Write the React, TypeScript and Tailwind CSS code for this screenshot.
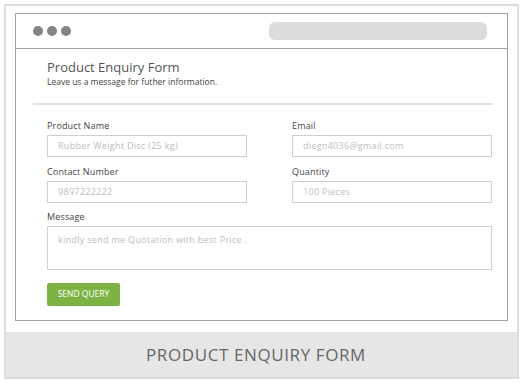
import React from 'react'

const font = { fontFamily: '"Open Sans", "Liberation Sans", sans-serif' }

const Field = ({ label, value }: { label: string; value: string }) => (
  <div className="flex flex-col">
    <label className="text-[9px] leading-[12px] tracking-[0.15px] text-[#444]">{label}</label>
    <div className="mt-[3px] h-[22px] border border-[#cfcfcf] pl-[10px] flex items-center text-[9px] tracking-[0.3px] text-[#bdbdbd]">
      {value}
    </div>
  </div>
)

export default function App() {
  return (
    <div className="w-[525px] h-[388px] bg-white pt-[4px] pl-[4px]" style={font}>
      <div className="w-[515px] h-[375px] border-2 border-[#dedede] flex flex-col">
        {/* Browser window */}
        <div className="mt-[7px] mx-[9px] h-[308px] border border-[#a3a3a3] flex flex-col">
          <div className="h-[35px] border-b border-[#a3a3a3] flex items-center justify-between pl-[17px] pr-[20px]">
            <div className="flex gap-[4px]">
              <span className="w-[10px] h-[10px] rounded-full bg-[#858585]" />
              <span className="w-[10px] h-[10px] rounded-full bg-[#858585]" />
              <span className="w-[10px] h-[10px] rounded-full bg-[#858585]" />
            </div>
            <div className="w-[218px] h-[18px] rounded-[6px] bg-[#dcdcdc]" />
          </div>

          <div className="pl-[17px] pr-[14px] pt-[10px]">
            <div className="px-[14px]">
              <h1 className="text-[13px] leading-[17px] text-[#555]">Product Enquiry Form</h1>
              <p className="text-[8.5px] leading-[11px] text-[#444]">Leave us a message for futher information.</p>
            </div>
            <div className="mt-[16px] h-[2px] bg-[#e2e2e2]" />

            <div className="pl-[14px] pr-[1px] pt-[15px]">
              <div className="grid grid-cols-2 gap-x-[45px] gap-y-[9px]">
                <Field label="Product Name" value="Rubber Weight Disc (25 kg)" />
                <Field label="Email" value="diego4036@gmail.com" />
                <Field label="Contact Number" value="9897222222" />
                <Field label="Quantity" value="100 Pieces" />
              </div>
              <div className="mt-[8px] flex flex-col">
                <label className="text-[9px] leading-[12px] tracking-[0.15px] text-[#444]">Message</label>
                <div className="mt-[3px] h-[44px] border border-[#cfcfcf] pl-[10px] pt-[6px] text-[9px] tracking-[0.3px] text-[#bdbdbd]">
                  kindly send me Quotation with best Price .
                </div>
              </div>
              <button className="mt-[13px] w-[73px] h-[23px] rounded-[2px] bg-[#7db343] text-white text-[8.5px]">
                SEND QUERY
              </button>
            </div>
          </div>
        </div>

        {/* Caption */}
        <div className="mt-auto h-[45px] bg-[#e6e6e6] flex items-center justify-center pr-[11px]">
          <span className="text-[17px] text-[#666] tracking-[0.6px]">PRODUCT ENQUIRY FORM</span>
        </div>
      </div>
    </div>
  )
}
